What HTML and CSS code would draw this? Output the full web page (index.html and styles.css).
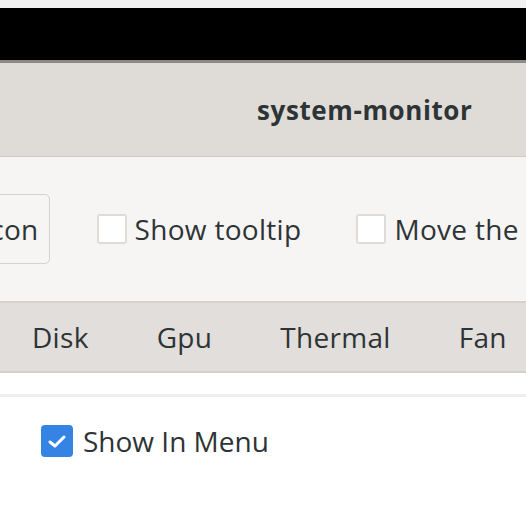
FILE: index.html
```html
<!DOCTYPE html>
<html lang="en">
<head>
  <meta charset="UTF-8">
  <meta name="viewport" content="width=device-width, initial-scale=1.0">
  <title>system-monitor</title>
  <link rel="stylesheet" href="styles.css">
</head>
<body>
  <div class="top-strip"></div>
  <div class="black-bar"></div>
  <div class="header-bar">
    <h1 class="title">system-monitor</h1>
  </div>

  <div class="toolbar">
    <button class="icon-btn">Show icon</button>
    <label class="check">
      <span class="box"></span>
      Show tooltip
    </label>
    <label class="check">
      <span class="box"></span>
      Move the clock
    </label>
  </div>

  <div class="tabs">
    <span class="tab">Disk</span>
    <span class="tab">Gpu</span>
    <span class="tab">Thermal</span>
    <span class="tab">Fan</span>
  </div>

  <div class="content">
    <div class="content-line"></div>
    <label class="check menu-check">
      <span class="box checked">
        <svg width="20" height="16" viewBox="0 0 20 16">
          <path d="M3 9 L8 13 L17 4" fill="none" stroke="#fff" stroke-width="3" stroke-linecap="round" stroke-linejoin="round"/>
        </svg>
      </span>
      Show In Menu
    </label>
  </div>
</body>
</html>
```

FILE: styles.css
```css
body {
  margin: 0;
  width: 526px;
  height: 526px;
  overflow: hidden;
  font-family: "Open Sans", "Noto Sans", sans-serif;
  color: #2e3436;
  background: #ffffff;
}
.top-strip {
  height: 8px;
  background: #f2f2f2;
}
.black-bar {
  height: 52px;
  background: #000;
}
.header-bar {
  height: 93px;
  background: #dfdcd8;
  border-top: 3px solid #8c8a87;
  border-bottom: 1px solid #cfcac5;
  display: flex;
  align-items: center;
}
.title {
  margin: 0 0 0 257px;
  font-size: 26px;
  font-weight: bold;
  letter-spacing: 0.6px;
  color: #2e3436;
  white-space: nowrap;
}
.toolbar {
  height: 144px;
  background: #f6f5f4;
  border-bottom: 2px solid #d6d1cc;
  display: flex;
  align-items: center;
  gap: 47px;
  overflow: hidden;
}
.icon-btn {
  flex: none;
  margin-left: -114px;
  height: 70px;
  padding: 0 10px 0 16px;
  font-family: inherit;
  font-size: 28px;
  letter-spacing: 0.3px;
  white-space: nowrap;
  color: #2e3436;
  background: #f6f5f4;
  border: 1px solid #d6d1cc;
  border-radius: 5px;
}
.toolbar .check {
  gap: 8px;
  margin-right: 8px;
}
.check {
  display: flex;
  align-items: center;
  gap: 10px;
  font-size: 28px;
  letter-spacing: 0.3px;
  white-space: nowrap;
}
.box {
  flex: none;
  width: 26px;
  height: 26px;
  background: #fff;
  border: 2px solid #dedbd8;
  border-radius: 3px;
  display: flex;
  align-items: center;
  justify-content: center;
}
.tabs {
  height: 68px;
  background: #e1dedb;
  border-bottom: 2px solid #d4d0cc;
  display: flex;
  align-items: center;
  gap: 68px;
  padding-left: 32px;
  font-size: 28px;
  letter-spacing: 0.3px;
}
.content {
  background: #fff;
}
.content-line {
  height: 3px;
  margin-top: 21px;
  background: #f0eeec;
}
.menu-check {
  margin: 25px 0 0 41px;
  letter-spacing: 0;
}
.box.checked {
  width: 28px;
  height: 28px;
  background: #3584e4;
  border-color: #3584e4;
  border-radius: 4px;
}
```
